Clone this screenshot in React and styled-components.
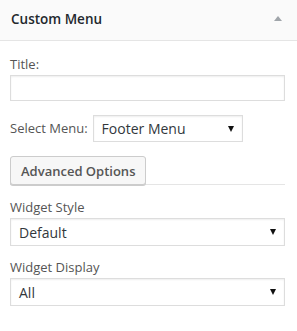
import React from 'react';
import styled, { createGlobalStyle } from 'styled-components';

const Global = createGlobalStyle`
    html, body {
        margin: 0;
        padding: 0;
        background: #fff;
    }
    body {
        font-family: "Open Sans", "Liberation Sans", sans-serif;
        font-size: 13px;
        color: #444;
    }
`

const Widget = styled.div`
    width: 297px;
    background: #fff;
`

const Header = styled.div`
    box-sizing: border-box;
    height: 41px;
    display: flex;
    align-items: center;
    justify-content: space-between;
    padding: 0 15px 3px 11px;
    background: #fafafa;
    border-bottom: 1px solid #e5e5e5;
`

const Heading = styled.h3`
    margin: 0;
    font-size: 13.5px;
    font-weight: 600;
    color: #23282d;
`

const Toggle = styled.span`
    width: 0;
    height: 0;
    border-left: 4px solid transparent;
    border-right: 4px solid transparent;
    border-bottom: 5px solid #a0a5aa;
`

const Body = styled.div`
    padding: 14px 12px 0 10px;
    display: flex;
    flex-direction: column;
`

const Field = styled.div`
    display: flex;
    flex-direction: column;
    margin-bottom: ${p => p.mb || 14}px;
`

const InlineField = styled.div`
    display: flex;
    align-items: center;
    gap: 5px;
    margin-bottom: 14px;
`

const Label = styled.label`
    font-size: 13px;
    line-height: 19px;
    color: #555;
    margin-bottom: ${p => (p.inline ? 0 : 1)}px;
`

const Input = styled.input`
    box-sizing: border-box;
    width: 100%;
    height: 26px;
    margin: 0;
    border: 1px solid #ddd;
    box-shadow: inset 0 1px 2px rgba(0,0,0,.07);
    font-family: inherit;
    font-size: 14px;
    outline: none;
`

const SelectBox = styled.div`
    box-sizing: border-box;
    width: ${p => p.w || '100%'};
    height: ${p => p.h || 28}px;
    display: flex;
    align-items: center;
    justify-content: space-between;
    padding: 0 8px;
    border: 1px solid #ddd;
    box-shadow: inset 0 1px 2px rgba(0,0,0,.07);
    background: #fff;
    font-size: 14px;
    color: #32373c;
`

const Caret = styled.span`
    width: 0;
    height: 0;
    border-left: 3.5px solid transparent;
    border-right: 3.5px solid transparent;
    border-top: 6px solid #111;
`

const ButtonRow = styled.div`
    display: flex;
    align-items: flex-end;
    border-bottom: 1px solid #e5e5e5;
    margin-bottom: 13px;
`

const Button = styled.button`
    box-sizing: border-box;
    height: 29px;
    padding: 0 10px;
    margin-bottom: -1px;
    border: 1px solid #ccc;
    border-radius: 3px;
    background: #f7f7f7;
    box-shadow: 0 1px 0 #ccc;
    font-family: inherit;
    font-size: 13px;
    font-weight: 600;
    color: #555;
`

const Select = ({ value, w, h }) => (
    <SelectBox w={w} h={h}>
        <span>{value}</span>
        <Caret />
    </SelectBox>
)

export default function App() {
    return (
        <Widget>
            <Global />
            <Header>
                <Heading>Custom Menu</Heading>
                <Toggle />
            </Header>
            <Body>
                <Field>
                    <Label>Title:</Label>
                    <Input type="text" />
                </Field>
                <InlineField>
                    <Label inline>Select Menu:</Label>
                    <Select value="Footer Menu" w="150px" h={27} />
                </InlineField>
                <ButtonRow>
                    <Button>Advanced Options</Button>
                </ButtonRow>
                <Field mb={12}>
                    <Label>Widget Style</Label>
                    <Select value="Default" />
                </Field>
                <Field>
                    <Label>Widget Display</Label>
                    <Select value="All" />
                </Field>
            </Body>
        </Widget>
    )
}
